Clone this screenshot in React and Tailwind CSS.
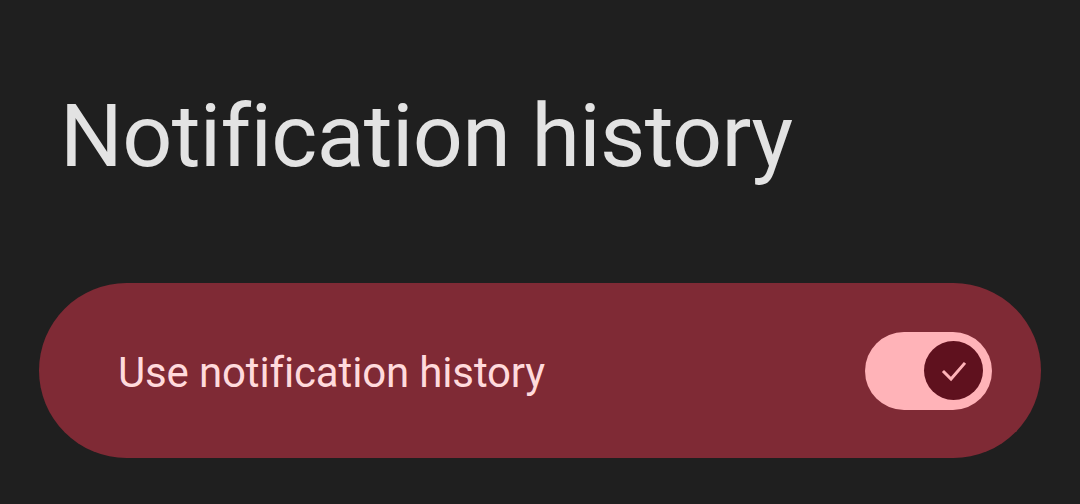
export default function App() {
  return (
    <div className="w-[1080px] h-[504px] bg-[#1f1f1f] overflow-hidden" style={{ fontFamily: "Roboto, 'Noto Sans', sans-serif" }}>
      <div className="pt-[86px] pl-[60px]">
        <h1 className="text-[88px] leading-[100px] tracking-[-0.65px] text-[#e3e3e3] font-normal">Notification history</h1>
      </div>
      <div className="mt-[97px] mx-[39px] h-[175px] rounded-full bg-[#7f2a35] flex items-center pl-[79px] pr-[49px]">
        <span className="flex-1 text-[42px] leading-[50px] pt-[5px] tracking-[-0.15px] text-[#ffdadc]">Use notification history</span>
        <div className="w-[127px] h-[78px] rounded-full bg-[#ffb3b8] flex items-center justify-end pr-[9px]">
          <div className="w-[59px] h-[59px] rounded-full bg-[#5f111e] flex items-center justify-center">
            <svg width="30" height="30" viewBox="0 0 30 30" fill="none">
              <path d="M5 16 L12 23 L25 8" stroke="#ffb3b8" strokeWidth="3" strokeLinecap="square" />
            </svg>
          </div>
        </div>
      </div>
    </div>
  );
}
